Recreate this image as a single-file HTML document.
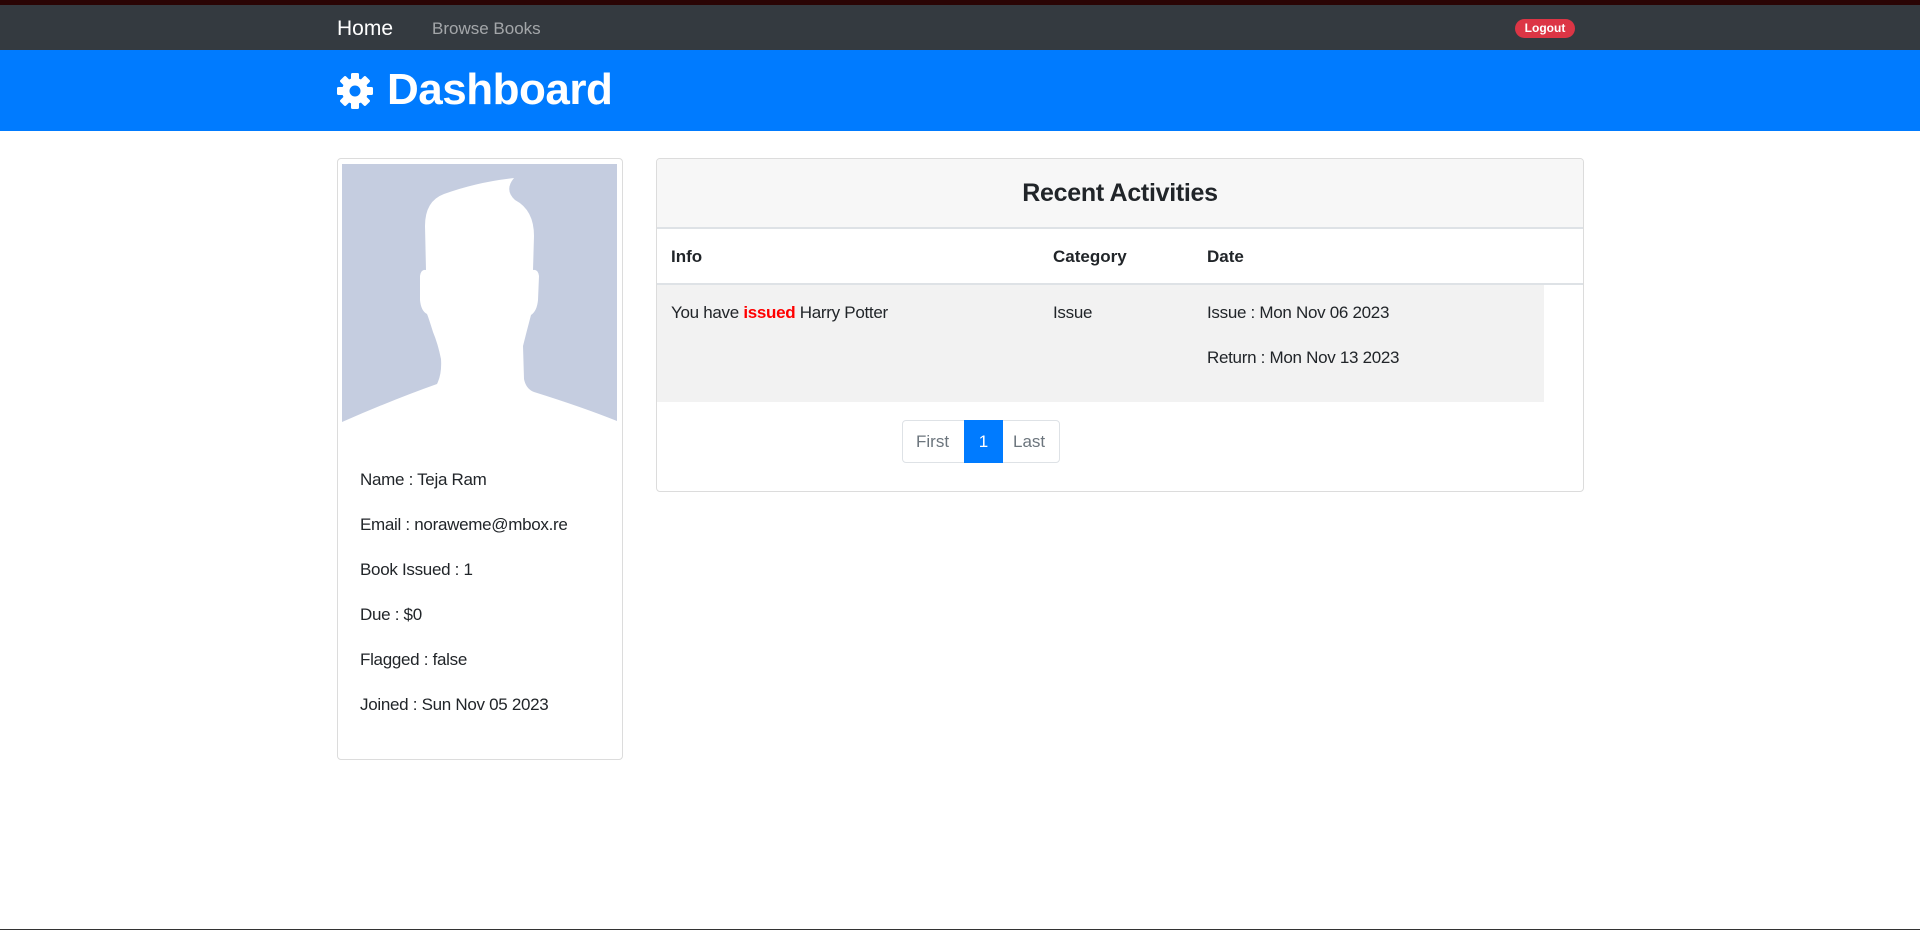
<!DOCTYPE html>
<html><head><meta charset="utf-8"><style>
*{margin:0;padding:0;box-sizing:border-box}
body{width:1920px;height:930px;position:relative;background:#fff;font-family:"Liberation Sans",sans-serif;color:#212529;overflow:hidden}
.a{position:absolute;white-space:nowrap}
.f17{font-size:17px;letter-spacing:-0.3px}
</style></head><body>
<div class="a" style="left:0;top:0;width:1920px;height:5px;background:#2a0404"></div>
<div class="a" style="left:0;top:5px;width:1920px;height:45px;background:#343a40"></div>
<div class="a" style="left:337px;top:17px;font-size:21px;color:#fff">Home</div>
<div class="a" style="left:432px;top:19px;font-size:17px;color:rgba(255,255,255,.55)">Browse Books</div>
<div class="a" style="left:1515px;top:19px;width:60px;height:19px;border-radius:10px;background:#dc3545;color:#fff;font-size:12px;font-weight:bold;text-align:center;line-height:19px">Logout</div>
<div class="a" style="left:0;top:50px;width:1920px;height:81px;background:#007bff"></div>
<svg class="a" style="left:335px;top:71px" width="40" height="40" viewBox="0 0 40 40"><g fill="#fff"><circle cx="20" cy="20" r="13"/><g id="t"><rect x="16" y="2" width="8" height="9" rx="1.5"/><rect x="16" y="29" width="8" height="9" rx="1.5"/></g><use href="#t" transform="rotate(45 20 20)"/><use href="#t" transform="rotate(90 20 20)"/><use href="#t" transform="rotate(135 20 20)"/></g><circle cx="20" cy="20" r="5.5" fill="#007bff"/></svg>
<div class="a" style="left:387px;top:65px;font-size:44px;font-weight:bold;color:#fff;letter-spacing:-0.5px">Dashboard</div>

<div class="a" style="left:337px;top:158px;width:286px;height:602px;border:1px solid #dcdcdc;border-radius:4px"></div>
<svg class="a" style="left:342px;top:164px" width="275" height="260" viewBox="0 0 275 260"><rect width="275" height="260" fill="#c5cde0"/><path fill="#fff" d="M0,262 L0,258 Q50,236 95,220 Q100,210 99,195 Q96,180 91,168 Q86,152 85,150 Q79,147 78,136 L78,112 Q79,105 84,106 L83,62 Q83,37 102,30 Q135,18 172,14 Q162,26 173,36 Q192,46 192,72 L191,106 Q196,105 197,112 L196,136 Q195,147 189,151 Q185,166 181,182 L182,215 Q184,225 192,228 Q240,243 275,257 L275,262 Z"/></svg>
<div class="a f17" style="left:360px;top:470px">Name : Teja Ram</div>
<div class="a f17" style="left:360px;top:515px">Email : noraweme@mbox.re</div>
<div class="a f17" style="left:360px;top:560px">Book Issued : 1</div>
<div class="a f17" style="left:360px;top:605px">Due : $0</div>
<div class="a f17" style="left:360px;top:650px">Flagged : false</div>
<div class="a f17" style="left:360px;top:695px">Joined : Sun Nov 05 2023</div>

<div class="a" style="left:656px;top:158px;width:928px;height:334px;border:1px solid #dcdcdc;border-radius:4px;overflow:hidden">
<div style="height:70px;background:#f7f7f7;border-bottom:2px solid #dee2e6;text-align:center;font-size:25px;line-height:68px;font-weight:bold;letter-spacing:-0.3px">Recent Activities</div>
<div style="height:56px;border-bottom:2px solid #dee2e6;position:relative;font-weight:bold;font-size:17px">
<span class="a" style="left:14px;top:18px">Info</span><span class="a" style="left:396px;top:18px">Category</span><span class="a" style="left:550px;top:18px">Date</span></div>
<div style="width:887px;height:117px;background:#f2f2f2;position:relative">
<span class="a f17" style="left:14px;top:18px">You have <b style="color:#f00">issued</b> Harry Potter</span>
<span class="a f17" style="left:396px;top:18px">Issue</span>
<span class="a f17" style="left:550px;top:18px">Issue : Mon Nov 06 2023</span>
<span class="a f17" style="left:550px;top:63px">Return : Mon Nov 13 2023</span>
</div>
</div>
<div class="a" style="left:902px;top:420px;width:158px;height:43px;border:1px solid #dee2e6;border-radius:4px;font-size:17px;color:#6c757d">
<span class="a" style="left:13px;top:11px">First</span>
<span class="a" style="left:61px;top:-1px;width:39px;height:43px;background:#007bff;color:#fff;text-align:center;line-height:43px">1</span>
<span class="a" style="left:110px;top:11px">Last</span>
</div>
<div class="a" style="left:0;top:929px;width:1920px;height:1px;background:#333"></div>
</body></html>
